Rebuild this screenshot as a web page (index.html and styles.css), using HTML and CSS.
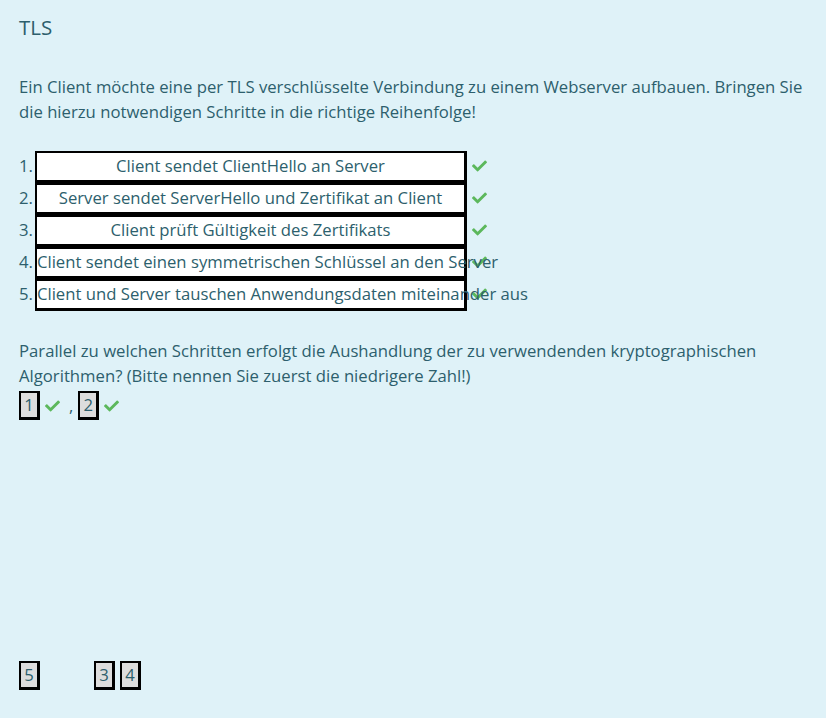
FILE: index.html
```html
<!DOCTYPE html>
<html lang="de">
<head>
<meta charset="utf-8">
<title>TLS</title>
<link rel="stylesheet" href="styles.css">
</head>
<body>
<main class="page">
  <h1 class="title">TLS</h1>
  <p class="intro">Ein Client möchte eine per TLS verschlüsselte Verbindung zu einem Webserver aufbauen. Bringen Sie die hierzu notwendigen Schritte in die richtige Reihenfolge!</p>

  <ol class="steps">
    <li class="step"><span class="num">1.</span><div class="slot">Client sendet ClientHello an Server</div><svg class="check" viewBox="0 64 512 384"><path d="M173.9 439.4l-166.4-166.4c-10-10-10-26.2 0-36.2l36.2-36.2c10-10 26.2-10 36.2 0L192 312.7 432.1 72.6c10-10 26.2-10 36.2 0l36.2 36.2c10 10 10 26.2 0 36.2l-294.4 294.4c-10 10-26.2 10-36.2 0z"/></svg></li>
    <li class="step"><span class="num">2.</span><div class="slot">Server sendet ServerHello und Zertifikat an Client</div><svg class="check" viewBox="0 64 512 384"><path d="M173.9 439.4l-166.4-166.4c-10-10-10-26.2 0-36.2l36.2-36.2c10-10 26.2-10 36.2 0L192 312.7 432.1 72.6c10-10 26.2-10 36.2 0l36.2 36.2c10 10 10 26.2 0 36.2l-294.4 294.4c-10 10-26.2 10-36.2 0z"/></svg></li>
    <li class="step"><span class="num">3.</span><div class="slot">Client prüft Gültigkeit des Zertifikats</div><svg class="check" viewBox="0 64 512 384"><path d="M173.9 439.4l-166.4-166.4c-10-10-10-26.2 0-36.2l36.2-36.2c10-10 26.2-10 36.2 0L192 312.7 432.1 72.6c10-10 26.2-10 36.2 0l36.2 36.2c10 10 10 26.2 0 36.2l-294.4 294.4c-10 10-26.2 10-36.2 0z"/></svg></li>
    <li class="step"><span class="num">4.</span><div class="slot">Client sendet einen symmetrischen Schlüssel an den Server</div><svg class="check" viewBox="0 64 512 384"><path d="M173.9 439.4l-166.4-166.4c-10-10-10-26.2 0-36.2l36.2-36.2c10-10 26.2-10 36.2 0L192 312.7 432.1 72.6c10-10 26.2-10 36.2 0l36.2 36.2c10 10 10 26.2 0 36.2l-294.4 294.4c-10 10-26.2 10-36.2 0z"/></svg></li>
    <li class="step"><span class="num">5.</span><div class="slot">Client und Server tauschen Anwendungsdaten miteinander aus</div><svg class="check" viewBox="0 64 512 384"><path d="M173.9 439.4l-166.4-166.4c-10-10-10-26.2 0-36.2l36.2-36.2c10-10 26.2-10 36.2 0L192 312.7 432.1 72.6c10-10 26.2-10 36.2 0l36.2 36.2c10 10 10 26.2 0 36.2l-294.4 294.4c-10 10-26.2 10-36.2 0z"/></svg></li>
  </ol>

  <p class="question">Parallel zu welchen Schritten erfolgt die Aushandlung der zu verwendenden kryptographischen Algorithmen? (Bitte nennen Sie zuerst die niedrigere Zahl!)</p>
  <div class="answers">
    <span class="tile">1</span><svg class="check small" viewBox="0 64 512 384"><path d="M173.9 439.4l-166.4-166.4c-10-10-10-26.2 0-36.2l36.2-36.2c10-10 26.2-10 36.2 0L192 312.7 432.1 72.6c10-10 26.2-10 36.2 0l36.2 36.2c10 10 10 26.2 0 36.2l-294.4 294.4c-10 10-26.2 10-36.2 0z"/></svg>
    <span class="comma">,</span>
    <span class="tile">2</span><svg class="check small" viewBox="0 64 512 384"><path d="M173.9 439.4l-166.4-166.4c-10-10-10-26.2 0-36.2l36.2-36.2c10-10 26.2-10 36.2 0L192 312.7 432.1 72.6c10-10 26.2-10 36.2 0l36.2 36.2c10 10 10 26.2 0 36.2l-294.4 294.4c-10 10-26.2 10-36.2 0z"/></svg>
  </div>

  <div class="pool">
    <span class="tile">5</span>
    <span class="spacer"></span>
    <span class="tile">3</span>
    <span class="tile">4</span>
  </div>
</main>
</body>
</html>
```

FILE: styles.css
```css
html, body {
  margin: 0;
  padding: 0;
  background: #dff2f8;
}
body {
  font-family: "Open Sans", "Noto Sans", sans-serif;
  color: #2d5f6d;
  font-size: 16.7px;
}
.page {
  padding: 14px 19px 0 19px;
  height: 718px;
  box-sizing: border-box;
  display: flex;
  flex-direction: column;
}
.title {
  margin: 0;
  font-size: 20.5px;
  font-weight: 400;
  line-height: 26px;
}
.intro {
  margin: 34px 0 0 0;
  line-height: 25px;
}
.steps {
  list-style: none;
  margin: 27px 0 0 0;
  padding: 0;
}
.step {
  display: flex;
  align-items: baseline;
  height: 32px;
}
.num {
  white-space: nowrap;
  margin-right: 2px;
}
.slot {
  width: 427px;
  height: 27px;
  background: #fff;
  border: 2px solid #000;
  border-right-width: 3px;
  border-bottom-width: 3px;
  text-align: center;
  white-space: nowrap;
  line-height: 26px;
  position: relative;
  z-index: 1;
}
.check {
  width: 15px;
  height: 12px;
  fill: #5cb85c;
  margin-left: 5px;
  position: relative;
  z-index: 0;
}
.question {
  margin: 27px 0 0 0;
  line-height: 25px;
}
.answers {
  display: flex;
  align-items: center;
  margin-top: 3px;
}
.tile {
  display: inline-block;
  width: 16px;
  height: 24px;
  line-height: 24px;
  text-align: center;
  background: #dddddd;
  border: 2px solid #000;
  border-right-width: 3px;
  border-bottom-width: 3px;
}
.check.small {
  margin-left: 5px;
}
.comma {
  margin: 0 5px 0 9px;
}
.pool {
  margin-top: auto;
  margin-bottom: 28px;
  display: flex;
  gap: 5px;
}
.spacer {
  width: 44px;
}
```
